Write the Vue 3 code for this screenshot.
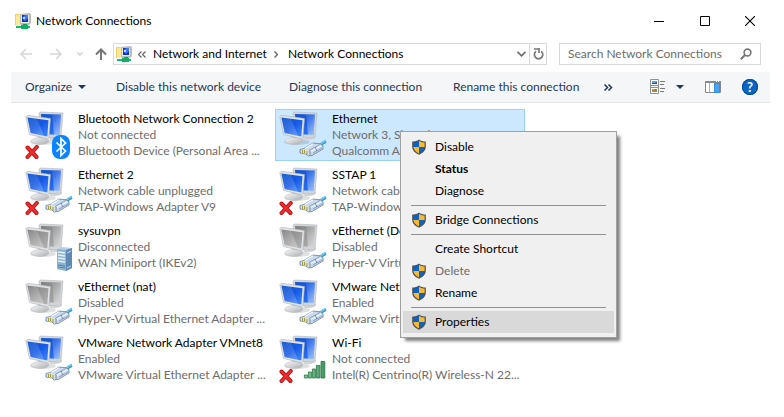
<script setup>
import { ref } from 'vue'

const search = ref('')
const selected = ref('Ethernet')

const commands = [
  { label: 'Organize', size: 'short', arrow: true },
  { label: 'Disable this network device', size: 'long' },
  { label: 'Diagnose this connection', size: 'medium' },
  { label: 'Rename this connection', size: 'regular' },
]

const connections = [
  { name: 'Bluetooth Network Connection 2', status: 'Not connected', device: 'Bluetooth Device (Personal Area ...', on: true, down: true, badge: 'bluetooth' },
  { name: 'Ethernet', status: 'Network 3, Shared', device: 'Qualcomm A', on: true, badge: 'cable' },
  { name: 'Ethernet 2', status: 'Network cable unplugged', device: 'TAP-Windows Adapter V9', on: true, down: true, badge: 'cable' },
  { name: 'SSTAP 1', status: 'Network cable', device: 'TAP-Windows', on: true, down: true, badge: 'cable' },
  { name: 'sysuvpn', status: 'Disconnected', device: 'WAN Miniport (IKEv2)', badge: 'server' },
  { name: 'vEthernet (Def', status: 'Disabled', device: 'Hyper-V Virtual', badge: 'cable' },
  { name: 'vEthernet (nat)', status: 'Disabled', device: 'Hyper-V Virtual Ethernet Adapter ...', badge: 'cable' },
  { name: 'VMware Network', status: 'Enabled', device: 'VMware Virtual', on: true, badge: 'cable' },
  { name: 'VMware Network Adapter VMnet8', status: 'Enabled', device: 'VMware Virtual Ethernet Adapter ...', on: true, badge: 'cable' },
  { name: 'Wi-Fi', status: 'Not connected', device: 'Intel(R) Centrino(R) Wireless-N 22...', on: true, down: true, badge: 'wifi' },
]

const menuGroups = [
  [{ label: 'Disable', shield: true }, { label: 'Status', bold: true }, { label: 'Diagnose' }],
  [{ label: 'Bridge Connections', shield: true }],
  [{ label: 'Create Shortcut' }, { label: 'Delete', shield: true, disabled: true }, { label: 'Rename', shield: true }],
  [{ label: 'Properties', shield: true, active: true }],
]
</script>

<template>
  <div class="window">
    <svg class="defs" width="0" height="0" aria-hidden="true">
      <defs>
        <linearGradient id="screen-on" x1="0" y1="0" x2="1" y2="1">
          <stop offset="0" stop-color="#1257cf" />
          <stop offset="0.5" stop-color="#1558e4" />
          <stop offset="1" stop-color="#3f8cff" />
        </linearGradient>
        <linearGradient id="screen-off" x1="0" y1="0" x2="1" y2="1">
          <stop offset="0" stop-color="#7d7d7d" />
          <stop offset="1" stop-color="#b4b4b4" />
        </linearGradient>
        <linearGradient id="shine" x1="0" y1="0" x2="0.6" y2="1">
          <stop offset="0" stop-color="#fff" stop-opacity="0.1" />
          <stop offset="1" stop-color="#fff" stop-opacity="0.6" />
        </linearGradient>
        <linearGradient id="stand" x1="0" y1="0" x2="1" y2="1">
          <stop offset="0" stop-color="#f8f8f8" />
          <stop offset="1" stop-color="#a9acb0" />
        </linearGradient>
        <linearGradient id="bars" x1="0" y1="0" x2="1" y2="0">
          <stop offset="0" stop-color="#8ccf9f" />
          <stop offset="1" stop-color="#3f9560" />
        </linearGradient>
        <symbol id="network-folder" viewBox="0 0 16 16">
          <path d="M0 1h4l1 1v10H0z" fill="#ecd168" />
          <path d="M1 2h4v10H1z" fill="#fae797" />
          <path d="M5 1l9-1 2 1v9l-2 2H6l-1-1z" fill="#b9bdb9" />
          <path d="M6 2h8v8H6z" fill="#e8ece8" />
          <path d="M7 2h6v7H7z" fill="#1731b5" />
          <path d="M7 5l3-3h3v3l-3 3z" fill="#3e78ee" />
          <path d="M8 4h2v2H8z" fill="#b8d7ff" />
          <path d="M8 11h4v2H8z" fill="#14a05e" />
          <path d="M1 13h14v2H1z" fill="#12b970" />
          <path d="M6 12h7v4H6z" fill="#0fae65" />
        </symbol>
        <symbol id="shield" viewBox="0 0 16 16">
          <path d="M8 0.4C6.300 1.800 3.800 2.500 1.200 2.500V7.500c0 4 3 6.500 6.800 8.300 3.800-1.800 6.800-4.300 6.800-8.300V2.500C12.200 2.500 9.700 1.800 8 0.400z" fill="#4a4f55" />
          <path d="M8 1.800C6.500 2.900 4.500 3.500 2.400 3.600V8H8z" fill="#0a64c8" />
          <path d="M8 1.800c1.500 1.100 3.500 1.700 5.600 1.800V8H8z" fill="#fdb92c" />
          <path d="M2.400 8c.2 3 2.600 5 5.600 6.500V8z" fill="#fdb92c" />
          <path d="M13.600 8c-.2 3-2.600 5-5.600 6.500V8z" fill="#0a64c8" />
        </symbol>
        <symbol id="cross" viewBox="0 0 14 14">
          <path d="M2.500 2.500L11.500 12M11.800 2L2.500 12" stroke="#b80f13" stroke-width="4" stroke-linecap="round" />
          <path d="M2.500 2.500L11.500 12M11.800 2L2.500 12" stroke="#ef2b2c" stroke-width="2.500" stroke-linecap="round" />
        </symbol>
        <symbol id="cable" viewBox="0 0 28 18">
          <path d="M17 8c4 0 5-4 10-5.500" fill="none" stroke="#3a9ccb" stroke-width="3" />
          <path d="M19 5.500c3 0 4-2.500 8-4" fill="none" stroke="#6cccee" stroke-width="1.500" />
          <path d="M1 10.500l4-1L14 4l8 1 2 2v3l-11 6.500-4 .5-2-2-6-1z" fill="#c9d9ee" stroke="#667c9e" stroke-width=".8" />
          <path d="M2 11l3-.8 5 1.300 1 4.500-2 .6-1.500-2L2 14z" fill="#dde3d0" />
          <path d="M10 11.500l11-6M14 14l9-5" fill="none" stroke="#7d93b5" stroke-width=".8" />
          <path d="M6 9.500l8-4.700M12 12.500l10-5.700" stroke="#f4f9ff" stroke-width="1.300" />
          <path d="M3.500 11v3M5.500 11v3M8 12v3.500" stroke="#a39a45" />
          <path d="M11 12v4.500M16 8l2 4" stroke="#60769a" stroke-width=".8" />
        </symbol>
      </defs>
    </svg>

    <header class="titlebar">
      <svg class="icon16"><use href="#network-folder" /></svg>
      <h1>Network Connections</h1>
      <div class="controls">
        <button type="button" aria-label="Minimize">
          <svg width="10" height="10" viewBox="0 0 10 10"><path d="M0 5.500h10" stroke="#000" /></svg>
        </button>
        <button type="button" aria-label="Maximize">
          <svg width="10" height="10" viewBox="0 0 10 10"><path d="M.5.5h9v9h-9z" fill="none" stroke="#000" /></svg>
        </button>
        <button type="button" aria-label="Close">
          <svg width="10" height="10" viewBox="0 0 10 10"><path d="M0 0l10 10M10 0L0 10" stroke="#000" stroke-width="1.100" /></svg>
        </button>
      </div>
    </header>

    <nav class="navbar" aria-label="Location">
      <div class="history">
        <button type="button" aria-label="Back" disabled>
          <svg width="12" height="12" viewBox="0 0 12 12"><path d="M12 6H1.500M6 1L1 6l5 5" fill="none" stroke="#d6d6d6" stroke-width="1.500" /></svg>
        </button>
        <button type="button" aria-label="Forward" disabled>
          <svg width="12" height="12" viewBox="0 0 12 12"><path d="M0 6h10.500M6 1l5 5-5 5" fill="none" stroke="#d6d6d6" stroke-width="1.500" /></svg>
        </button>
        <button type="button" class="recent" aria-label="Recent locations" disabled>
          <svg width="6" height="4" viewBox="0 0 6 4"><path d="M.5.5L3 3 5.500.5" fill="none" stroke="#cfcfcf" stroke-width="1.500" /></svg>
        </button>
        <button type="button" class="up" aria-label="Up">
          <svg width="12" height="12" viewBox="0 0 12 12"><path d="M6 12V1.500M1 6.500l5-5 5 5" fill="none" stroke="#757575" stroke-width="2" /></svg>
        </button>
      </div>
      <div class="address">
        <svg class="icon16"><use href="#network-folder" /></svg>
        <svg class="overflow" width="8" height="7" viewBox="0 0 8 7"><path d="M3.500.5l-3 3 3 3M7.500.5l-3 3 3 3" fill="none" stroke="#666" stroke-width="1.200" /></svg>
        <a class="crumb parent" href="#">Network and Internet</a>
        <svg class="sep" width="4" height="7" viewBox="0 0 4 7"><path d="M.5.5l3 3-3 3" fill="none" stroke="#666" stroke-width="1.400" /></svg>
        <a class="crumb" href="#">Network Connections</a>
        <button type="button" class="expand" aria-label="Previous locations">
          <svg width="9" height="6" viewBox="0 0 9 6"><path d="M.5.8l4 4 4-4" fill="none" stroke="#6f6f6f" stroke-width="1.800" /></svg>
        </button>
        <button type="button" class="refresh" aria-label="Refresh">
          <svg width="11" height="12" viewBox="0 0 11 12"><path d="M3 3.300A4.200 4.200 0 1 0 8.200 3.300" fill="none" stroke="#777" stroke-width="1.700" /><path d="M6 0v5M1 1h5.500" fill="none" stroke="#777" stroke-width="1.600" /></svg>
        </button>
      </div>
      <label class="search">
        <input v-model="search" type="text" placeholder="Search Network Connections" aria-label="Search Network Connections" />
        <svg width="12" height="12" viewBox="0 0 12 12"><circle cx="7.500" cy="4.500" r="3.400" fill="none" stroke="#777" stroke-width="1.600" /><path d="M5 7L.8 11.200" stroke="#777" stroke-width="2" /></svg>
      </label>
    </nav>

    <div class="toolbar">
      <button v-for="c in commands" :key="c.label" type="button" class="command" :class="c.size">
        {{ c.label }}
        <svg v-if="c.arrow" width="8" height="4" viewBox="0 0 8 4"><path d="M0 0h8L4 4z" fill="#1e395b" /></svg>
      </button>
      <button type="button" aria-label="More commands">
        <svg width="9" height="7" viewBox="0 0 9 7"><path d="M.5.5l3 3-3 3M4.500.5l3 3-3 3" fill="none" stroke="#1e395b" stroke-width="1.500" /></svg>
      </button>
      <div class="tools">
        <button type="button" class="view" aria-label="Change your view">
          <svg width="16" height="16" viewBox="0 0 16 16">
            <path d="M.5.5h8v6h-8zM.5 8.500h8v6h-8z" fill="#fff" stroke="#919191" />
            <path d="M.5 6v3M8.500 6v3" stroke="#919191" />
            <path d="M2 2h5v3H2z" fill="#5ea7e2" /><path d="M2 4h3l2-1v2H2z" fill="#28517d" />
            <path d="M2 10h5v3H2z" fill="#6fae50" /><path d="M4 10h2v2H4z" fill="#d06a2c" /><path d="M2 10h2v1H2z" fill="#72a9d3" />
            <path d="M10 2.500h5M10 5.500h4M10 9.500h5M10 12.500h4" stroke="#777" />
          </svg>
          <svg width="8" height="4" viewBox="0 0 8 4"><path d="M0 0h8L4 4z" fill="#1e395b" /></svg>
        </button>
        <button type="button" aria-label="Preview pane">
          <svg width="16" height="12" viewBox="0 0 16 12">
            <path d="M.5.500h15v11H.5z" fill="#fff" stroke="#888" />
            <path d="M0 0h16v2H0z" fill="#858b91" /><path d="M11 .5h1M13 .5h1" stroke="#fff" />
            <path d="M4.500 2v9" stroke="#aaa" />
            <path d="M9 2h6v10H9z" fill="#3391e4" /><path d="M10 3h4v8h-4z" fill="#4ba3f0" />
          </svg>
        </button>
        <button type="button" aria-label="Help" class="help">?</button>
      </div>
    </div>

    <main class="content">
      <ul class="connections">
        <li v-for="c in connections" :key="c.name">
          <button type="button" class="connection" :class="{ selected: selected === c.name }" @click="selected = c.name">
            <svg class="device" width="48" height="49" viewBox="0 0 48 49">
              <ellipse cx="18" cy="31" rx="13" ry="3" fill="#000" opacity="0.12" />
              <path d="M24 25l8-3 5 3c1 3-6 5-12 4z" fill="#d4d7da" />
              <path d="M14 2l2-1 22 1-2 24-2 1-18-1z" fill="#d2d6d9" stroke="#b4b8bc" stroke-width=".6" />
              <path d="M16 3l20 .5L34.500 24 17 23z" :fill="c.on ? 'url(#screen-on)' : 'url(#screen-off)'" />
              <path d="M27 3.300l9 .2L34.500 24H29z" fill="url(#shine)" opacity=".7" />
              <path d="M13 24l7 1 .5 4h-7z" fill="#b7babd" />
              <ellipse cx="15" cy="30" rx="9" ry="3.400" fill="url(#stand)" stroke="#b9bcc0" stroke-width=".5" />
              <path d="M.8 5.500L3 4.300 25.500 7.500 24 27l-1.500.8L4.500 23.500z" fill="#e1e4e6" stroke="#acb0b4" stroke-width=".6" />
              <path d="M2.400 6.500L23.500 9.300 22.300 25.500 5.700 22z" :fill="c.on ? 'url(#screen-on)' : 'url(#screen-off)'" />
              <path d="M2.400 6.500l9.600 1.300L19 24.800 5.700 22z" fill="url(#shine)" :opacity="c.on ? 0.35 : 0.5" />
              <use v-if="c.down" href="#cross" x="0" y="34" width="14" height="14" />
              <use v-if="c.badge === 'cable'" href="#cable" x="20" y="28" width="28" height="18" />
              <g v-else-if="c.badge === 'bluetooth'">
                <rect x="27" y="24" width="18" height="24" rx="8" fill="#0a84ff" />
                <path d="M31.500 31.500l9 8.500-4.500 4.500v-17l4.500 4.500-9 8.500" fill="none" stroke="#fff" stroke-width="1.700" />
              </g>
              <g v-else-if="c.badge === 'server'">
                <path d="M32 26l5-2 10 1v20l-6 3-9-2z" fill="#b5d0e8" />
                <path d="M32 26l9 1v21l-9-2z" fill="#8fb3d3" />
                <path d="M41 27l6-2v20l-6 3z" fill="#5d89b4" />
                <path d="M33 29l7 1M33 32l7 1M33 35l7 1M33 38l7 1" stroke="#e4f1fb" stroke-width="1.300" />
                <path d="M33 42l7 1M33 44l7 1" stroke="#5483af" />
                <path d="M42 30l4-2M42 45l4-2" stroke="#bfdcf2" />
              </g>
              <g v-else fill="url(#bars)" stroke="#2c7448" stroke-width=".8">
                <path d="M25.400 40h3v3h-3zM29.400 37h3v6h-3zM33.400 34h3v9h-3zM37.400 30.500h3.500V43h-3.500zM42 26.500h3.800V43H42z" />
              </g>
            </svg>
            <span class="details">
              <span class="name">{{ c.name }}</span>
              <span>{{ c.status }}</span>
              <span>{{ c.device }}</span>
            </span>
          </button>
        </li>
      </ul>

      <div class="menu" role="menu">
        <div v-for="(group, i) in menuGroups" :key="i" class="group" role="group">
          <button
            v-for="m in group" :key="m.label" type="button" role="menuitem"
            :class="{ bold: m.bold, active: m.active }" :disabled="m.disabled"
          >
            <span class="slot"><svg v-if="m.shield" class="icon16"><use href="#shield" /></svg></span>
            {{ m.label }}
          </button>
        </div>
      </div>
    </main>
  </div>
</template>

<style>
body {
  background: #fff;
}
</style>

<style scoped>
.window {
  padding: 0 14px 0 11px;
  font: 12px/16px Lato, "Open Sans", sans-serif;
  color: #000;
}
.defs {
  position: absolute;
}
svg {
  display: block;
  flex: none;
}
button {
  display: flex;
  align-items: center;
  margin: 0;
  padding: 0;
  border: 0;
  background: none;
  font: inherit;
  color: inherit;
  text-align: left;
  white-space: nowrap;
}
.icon16 {
  width: 16px;
  height: 16px;
}
.titlebar {
  display: flex;
  align-items: center;
  gap: 5px;
  height: 42px;
  padding-left: 4px;
}
h1 {
  margin: 0;
  font: inherit;
}
.controls {
  display: flex;
  margin-left: auto;
}
.controls button {
  justify-content: center;
  width: 46px;
  height: 30px;
}
.controls button:last-child {
  width: 44px;
  margin-right: -2px;
}
.navbar {
  display: flex;
  align-items: center;
  height: 22px;
  margin: 1px 9px 7px 0;
}
.history {
  display: flex;
  align-items: center;
  width: 102px;
  padding-left: 9px;
  box-sizing: border-box;
  gap: 18px;
}
.history .recent {
  margin-left: -3px;
}
.history .up {
  margin-left: -6px;
}
.address {
  display: flex;
  flex: 1;
  align-items: center;
  height: 20px;
  padding-left: 2px;
  border: 1px solid #d9d9d9;
}
.overflow {
  margin: 0 7px 0 6px;
}
.crumb {
  color: #000;
  text-decoration: none;
  white-space: nowrap;
}
.parent {
  width: 121px;
}
.sep {
  margin-right: 10px;
}
.expand {
  margin-left: auto;
  padding-right: 3px;
}
.refresh {
  justify-content: center;
  width: 17px;
  height: 20px;
  border-left: 1px solid #d9d9d9;
}
.search {
  display: flex;
  align-items: center;
  width: 184px;
  height: 20px;
  margin-left: 12px;
  padding: 0 8px;
  border: 1px solid #d9d9d9;
}
.search input {
  flex: 1;
  min-width: 0;
  padding: 0;
  border: 0;
  outline: 0;
  background: none;
  font: inherit;
}
.search input::placeholder {
  color: #6d6d6d;
  opacity: 1;
}
.toolbar {
  display: flex;
  align-items: center;
  height: 30px;
  padding: 0 12px 0 14px;
  border-bottom: 1px solid #e5e5e5;
  background: #f5f6f7;
  color: #1e395b;
}
.command {
  gap: 6px;
}
.short {
  width: 91px;
}
.long {
  width: 173px;
}
.medium {
  width: 164px;
}
.regular {
  width: 151px;
}
.tools {
  display: flex;
  align-items: center;
  gap: 21px;
  margin-left: auto;
}
.view {
  gap: 10px;
}
.help {
  justify-content: center;
  width: 16px;
  height: 16px;
  border-radius: 8px;
  background: #0a66c2;
  box-shadow: inset 0 0 0 1px #064b94;
  color: #fff;
  font-size: 13px;
  font-weight: 700;
}
.content {
  position: relative;
  padding: 6px 10px;
}
.connections {
  display: grid;
  grid-template-columns: repeat(auto-fill, 250px);
  gap: 4px;
  margin: 0;
  padding: 0;
  list-style: none;
}
.connection {
  align-items: flex-start;
  gap: 5px;
  width: 100%;
  height: 52px;
  padding: 1px 3px;
  border: 1px solid transparent;
}
.selected {
  border-color: #99d1ff;
  background: #cce8ff;
}
.details {
  display: flex;
  flex-direction: column;
  color: #6d6d6d;
}
.name {
  color: #000;
}
.menu {
  position: absolute;
  top: 28px;
  left: 389px;
  width: 211px;
  padding: 4px 2px;
  border: 1px solid #a0a0a0;
  background: #f0f0f0;
  box-shadow: 4px 4px 3px -1px rgba(0, 0, 0, 0.5);
}
.group + .group {
  padding-top: 7px;
  background: linear-gradient(#919191, #919191) 8px 3px / 195px 1px no-repeat;
}
.menu button {
  width: 100%;
  height: 22px;
}
.menu .slot {
  width: 24px;
  padding-left: 8px;
}
.menu .bold {
  font-weight: 700;
}
.menu .active {
  background: #d9d9d9;
}
.menu button:disabled {
  color: #6d6d6d;
}
</style>
